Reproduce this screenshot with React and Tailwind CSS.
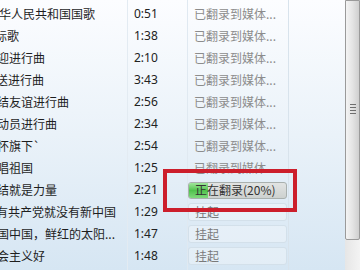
import React from "react";

const rows = [
  { t: "中华人民共和国国歌", ml: "-ml-[13px]", d: "0:51", s: "done" },
  { t: "国际歌", ml: "-ml-[17px]", d: "1:38", s: "done" },
  { t: "欢迎进行曲", ml: "-ml-[15px]", d: "2:10", s: "done" },
  { t: "欢送进行曲", ml: "-ml-[16px]", d: "3:43", s: "done" },
  { t: "团结友谊进行曲", ml: "-ml-[15px]", d: "2:56", s: "done" },
  { t: "总动员进行曲", ml: "-ml-[15px]", d: "2:34", s: "done" },
  { t: "在怀旗下`", ml: "-ml-[15px]", d: "2:54", s: "done" },
  { t: "歌唱祖国", ml: "-ml-[15px]", d: "1:25", s: "done" },
  { t: "团结就是力量", ml: "-ml-[15px]", d: "2:21", s: "prog" },
  { t: "没有共产党就没有新中国", ml: "-ml-[16px]", d: "1:29", s: "wait" },
  { t: "祖国中国，鲜红的太阳...", ml: "-ml-[15px]", d: "1:47", s: "wait" },
  { t: "社会主义好", ml: "-ml-[15px]", d: "1:48", s: "wait" },
];

const cjk = "font-['Microsoft_YaHei','Noto_Sans_CJK_SC',sans-serif]";

function Status({ s }) {
  if (s === "done") {
    return (
      <div className={`pl-[7px] text-[12px] text-[#8c8c8c] whitespace-nowrap ${cjk}`}>
        已翻录到媒体...
      </div>
    );
  }
  if (s === "prog") {
    return (
      <div className="mx-[1px] h-[17px] rounded-[3px] border border-[#a9b0ae] bg-gradient-to-b from-[#e2e4e3] to-[#cdd1cf] relative overflow-hidden flex items-center">
        <div className="absolute left-0 top-0 bottom-0 w-[19px] bg-gradient-to-b from-[#9ee69a] via-[#4fc24b] to-[#7fd97b]" />
        <span className={`relative pl-[6px] text-[12px] text-[#333] whitespace-nowrap ${cjk}`}>
          正在翻录(20%)
        </span>
      </div>
    );
  }
  return (
    <div className="mx-[1px] h-[18px] rounded-[3px] border border-[#d3e0ea] bg-[#ffffff]/30 flex items-center">
      <span className={`pl-[6px] text-[12px] text-[#7a7a7a] ${cjk}`}>挂起</span>
    </div>
  );
}

export default function App() {
  return (
    <div className="w-[360px] h-[270px] overflow-hidden relative flex bg-gradient-to-b from-[#fcfdff] via-[#eaf2f9] to-[#d6e6f3]">
      <div className="w-[345px] h-full relative">
        <div className="flex flex-col pt-[3px]">
          {rows.map((r, i) => (
            <div key={i} className="h-[22px] flex items-center">
              <div className="w-[127px] h-full overflow-hidden flex items-center">
                <span className={`${r.ml} text-[12px] text-[#1e1e1e] whitespace-nowrap ${cjk}`}>{r.t}</span>
              </div>
              <div className="w-[60px] h-full flex items-center pl-[7px] text-[12px] text-[#222] font-['Segoe_UI','Noto_Sans',sans-serif]">
                {r.d}
              </div>
              <div className="w-[101px] h-full flex flex-col justify-center">
                <Status s={r.s} />
              </div>
            </div>
          ))}
        </div>
        <div className="absolute top-0 bottom-0 left-[127px] w-px bg-[#e3ebf2]" />
        <div className="absolute top-0 bottom-0 left-[187px] w-px bg-[#e0e9f1]" />
        <div className="absolute top-0 bottom-0 left-[288px] w-px bg-[#d8e3ec]" />
        <div className="absolute left-[163px] top-[169px] w-[134px] h-[43px] border-[4px] border-[#cc1e2b]" />
      </div>
      <div className="w-[15px] h-full flex flex-col bg-[#ececec]">
        <div className="h-[240px] border border-[#9a9a9a] rounded-b-[2px] bg-gradient-to-r from-[#f4f4f4] via-[#e4e4e4] to-[#cfcfcf] flex items-start justify-center pt-[103px]">
          <div className="flex flex-col gap-[2px]">
            <div className="w-[6px] h-px bg-[#6f6f6f]" />
            <div className="w-[6px] h-px bg-[#6f6f6f]" />
            <div className="w-[6px] h-px bg-[#6f6f6f]" />
            <div className="w-[6px] h-px bg-[#6f6f6f]" />
          </div>
        </div>
        <div className="flex-1 bg-gradient-to-r from-[#e6e6e6] to-[#f3f3f3]" />
      </div>
    </div>
  );
}
